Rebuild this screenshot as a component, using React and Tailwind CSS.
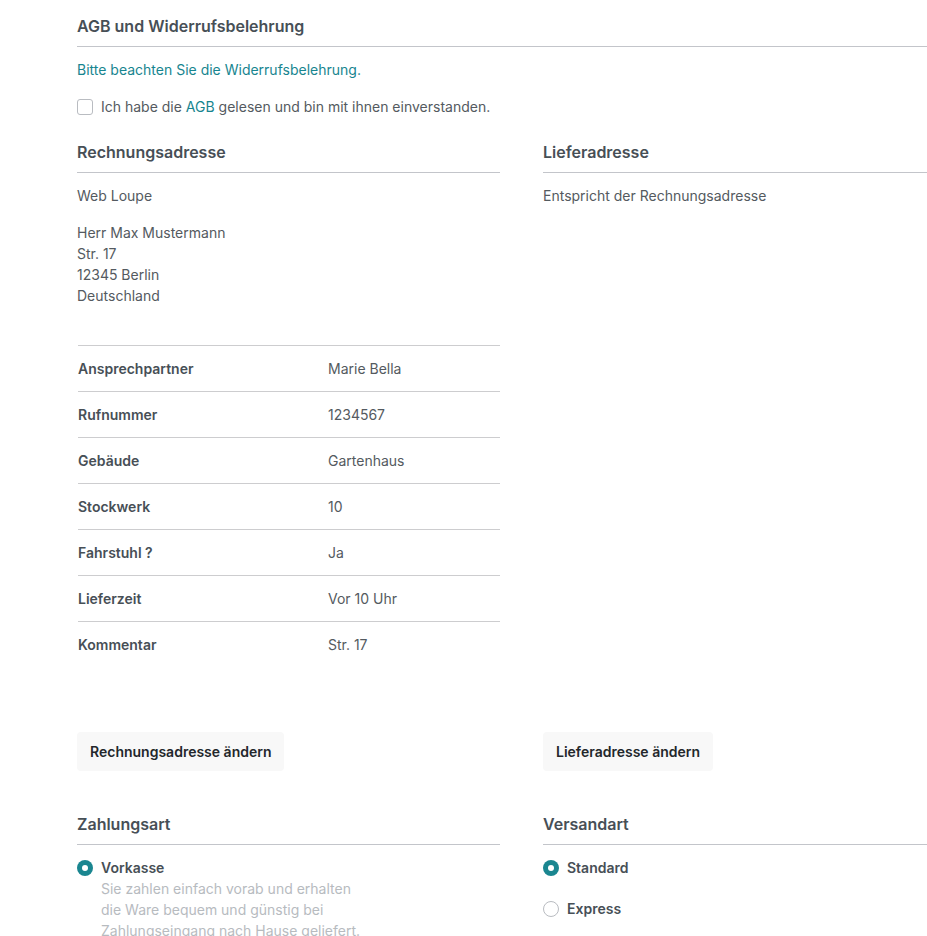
import React, { useState } from 'react';

const font = { fontFamily: 'Inter, "Noto Sans", sans-serif' };

const details = [
    ['Ansprechpartner', 'Marie Bella'],
    ['Rufnummer', '1234567'],
    ['Gebäude', 'Gartenhaus'],
    ['Stockwerk', '10'],
    ['Fahrstuhl ?', 'Ja'],
    ['Lieferzeit', 'Vor 10 Uhr'],
    ['Kommentar', 'Str. 17'],
];

const SectionTitle = ({ children }) => (
    <h2 className="text-base leading-6 font-semibold text-[#474f56] pb-2 border-b border-[#c3c5ca]">
        {children}
    </h2>
);

const Radio = ({ checked }) =>
    checked ? (
        <span className="w-4 h-4 rounded-full bg-[#1a8690] flex items-center justify-center shrink-0">
            <span className="w-[6px] h-[6px] rounded-full bg-white" />
        </span>
    ) : (
        <span className="w-4 h-4 rounded-full border border-[#b9bcc1] bg-white shrink-0" />
    );

const App = () => {
    const [accepted, setAccepted] = useState(false);
    const [payment] = useState('vorkasse');
    const [shipping, setShipping] = useState('standard');

    return (
        <div className="w-[927px] overflow-hidden bg-white min-h-[936px]" style={font}>
            <div className="w-[889px] ml-[77px] pt-[14px] text-sm text-[#545a60]">
                {/* AGB */}
                <SectionTitle>AGB und Widerrufsbelehrung</SectionTitle>
                <p className="mt-[13px] leading-5 text-[#17858f]">Bitte beachten Sie die Widerrufsbelehrung.</p>
                <label className="mt-[17px] flex items-center gap-2 leading-5 cursor-pointer">
                    <span
                        onClick={() => setAccepted(!accepted)}
                        className={`w-4 h-4 rounded-[3px] border ${accepted ? 'border-[#1a8690] bg-[#1a8690]' : 'border-[#b9bcc1] bg-white'}`}
                    />
                    <span>
                        Ich habe die <span className="text-[#17858f]">AGB</span> gelesen und bin mit ihnen einverstanden.
                    </span>
                </label>

                {/* Adressen */}
                <div className="mt-[23px] grid grid-cols-2 gap-x-[43px]">
                    <div>
                        <SectionTitle>Rechnungsadresse</SectionTitle>
                        <p className="mt-3 leading-[21px]">Web Loupe</p>
                        <p className="mt-4 leading-[21px]">
                            Herr Max Mustermann<br />
                            Str. 17<br />
                            12345 Berlin<br />
                            Deutschland
                        </p>
                        <div className="mt-[39px] pl-px">
                            {details.map(([label, value]) => (
                                <div key={label} className="h-[46px] border-t border-[#cdcdcf] flex items-center">
                                    <span className="w-[250px] font-semibold text-[#474f56]">{label}</span>
                                    <span>{value}</span>
                                </div>
                            ))}
                        </div>
                    </div>
                    <div>
                        <SectionTitle>Lieferadresse</SectionTitle>
                        <p className="mt-3 leading-[21px]">Entspricht der Rechnungsadresse</p>
                    </div>

                    <div className="mt-[65px]">
                        <button className="h-[39px] px-[13px] rounded-sm bg-[#f8f8f8] font-semibold text-[#23272b]">
                            Rechnungsadresse ändern
                        </button>
                    </div>
                    <div className="mt-[65px]">
                        <button className="h-[39px] px-[13px] rounded-sm bg-[#f8f8f8] font-semibold text-[#23272b]">
                            Lieferadresse ändern
                        </button>
                    </div>

                    {/* Zahlung / Versand */}
                    <div className="mt-[41px]">
                        <SectionTitle>Zahlungsart</SectionTitle>
                        <div className="mt-[13px] flex gap-2">
                            <div className="h-5 flex items-center">
                                <Radio checked={payment === 'vorkasse'} />
                            </div>
                            <div>
                                <p className="leading-5 font-semibold text-[#474f56]">Vorkasse</p>
                                <p className="leading-[21px] text-[#b7bbbf] w-[260px]">
                                    Sie zahlen einfach vorab und erhalten die Ware bequem und günstig bei Zahlungseingang nach Hause geliefert.
                                </p>
                            </div>
                        </div>
                    </div>
                    <div className="mt-[41px]">
                        <SectionTitle>Versandart</SectionTitle>
                        <div className="mt-[13px] flex flex-col gap-[21px]">
                            {[['standard', 'Standard'], ['express', 'Express']].map(([key, name]) => (
                                <div key={key} className="flex items-center gap-2 leading-5 cursor-pointer" onClick={() => setShipping(key)}>
                                    <Radio checked={shipping === key} />
                                    <span className="font-semibold text-[#474f56]">{name}</span>
                                </div>
                            ))}
                        </div>
                    </div>
                </div>
            </div>
        </div>
    );
};

export default App;
